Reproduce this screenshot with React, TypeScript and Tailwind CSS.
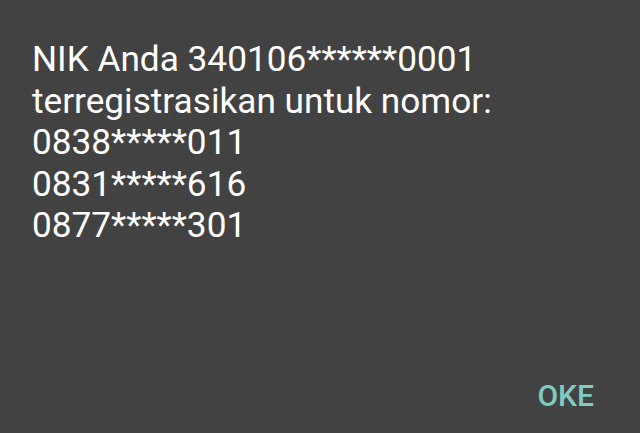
export default function App() {
  return (
    <div className="w-[640px] h-[433px] bg-[#424242] flex flex-col justify-between" style={{ fontFamily: "Roboto, sans-serif" }}>
      <div className="pl-[32px] pt-[39px] text-[35.2px] leading-[41.5px] text-white">
        <div>NIK Anda 340106******0001</div>
        <div>terregistrasikan untuk nomor:</div>
        <div>0838*****011</div>
        <div>0831*****616</div>
        <div>0877*****301</div>
      </div>
      <div className="flex justify-end pr-[46px] pb-[19px]">
        <span className="text-[30px] font-medium leading-[36px] text-[#80cbc4]">OKE</span>
      </div>
    </div>
  );
}
